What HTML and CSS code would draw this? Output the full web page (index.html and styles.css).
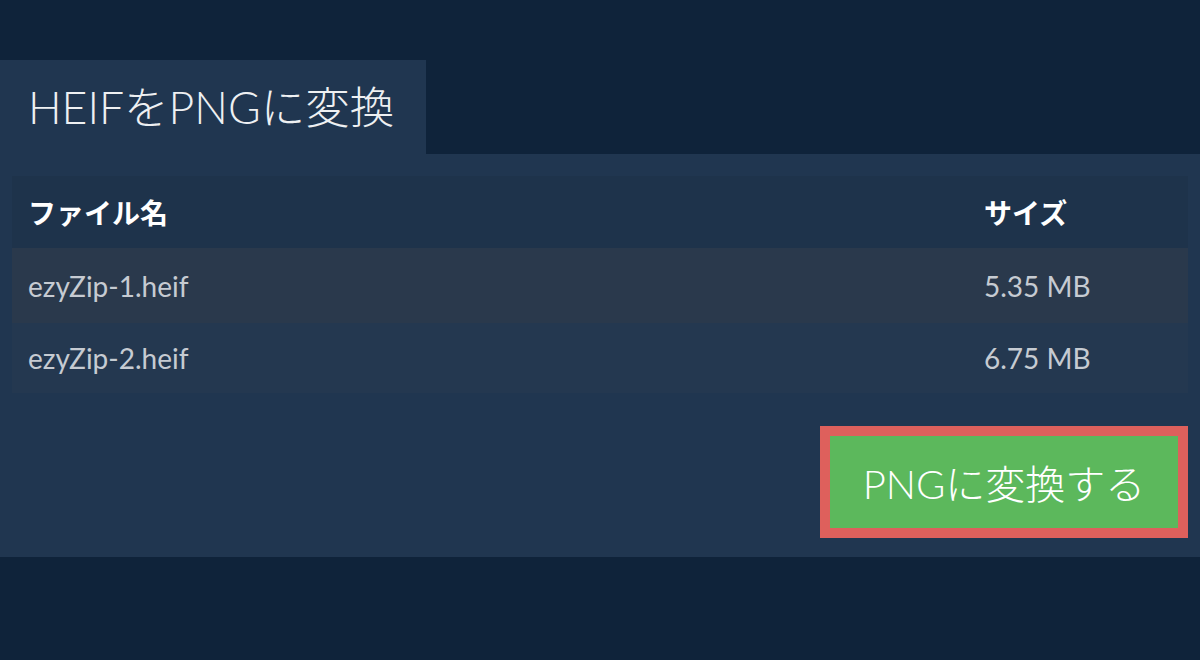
FILE: index.html
```html
<!DOCTYPE html>
<html lang="ja">

<head>
  <meta charset="UTF-8">
  <title>HEIFをPNGに変換</title>
  <link rel="stylesheet" href="styles.css">
</head>

<body>
  <div class="wrap">
    <h2 class="tab">HEIFをPNGに変換</h2>
    <div class="panel">
      <table class="files">
        <thead>
          <tr>
            <th class="col-name">ファイル名</th>
            <th class="col-size">サイズ</th>
          </tr>
        </thead>
        <tbody>
          <tr class="odd">
            <td>ezyZip-1.heif</td>
            <td>5.35 MB</td>
          </tr>
          <tr class="even">
            <td>ezyZip-2.heif</td>
            <td>6.75 MB</td>
          </tr>
        </tbody>
      </table>
      <div class="actions">
        <button class="convert">PNGに変換する</button>
      </div>
    </div>
  </div>
</body>

</html>
```

FILE: styles.css
```css
body,
h2 {
  margin: 0;
}

body {
  background-color: #0f233a;
  font-family: Lato, "Noto Sans CJK JP", sans-serif;
  color: #fff;
}

.wrap {
  padding-top: 60px;
}

.tab {
  display: inline-block;
  width: 426px;
  height: 94px;
  box-sizing: border-box;
  padding-left: 28px;
  background-color: #203650;
  font: 300 44.5px/94px Lato, "Noto Sans CJK JP", sans-serif;
  color: #eef0f2;
  vertical-align: top;
}

.panel {
  background-color: #203650;
  padding: 22px 12px 19px;
}

.files {
  width: 100%;
  border-collapse: collapse;
  font-size: 28px;
}

.files th,
.files td {
  text-align: left;
  padding: 0 16px;
}

.files th {
  height: 72px;
  font-weight: bold;
  background-color: #1e334b;
  color: #fff;
}

.files td {
  color: #c6cbd2;
}

.col-size {
  width: 188px;
}

.odd td {
  height: 75px;
  background-color: #2a394c;
}

.even td {
  height: 70px;
  background-color: #243850;
}

.actions {
  display: flex;
  justify-content: flex-end;
  margin-top: 33px;
}

.convert {
  width: 368px;
  height: 112px;
  box-sizing: border-box;
  border: 10px solid #de605c;
  background-color: #5cb85c;
  color: #fff;
  font: 300 40px Lato, "Noto Sans CJK JP", sans-serif;
  padding: 0;
  cursor: pointer;
}
```
